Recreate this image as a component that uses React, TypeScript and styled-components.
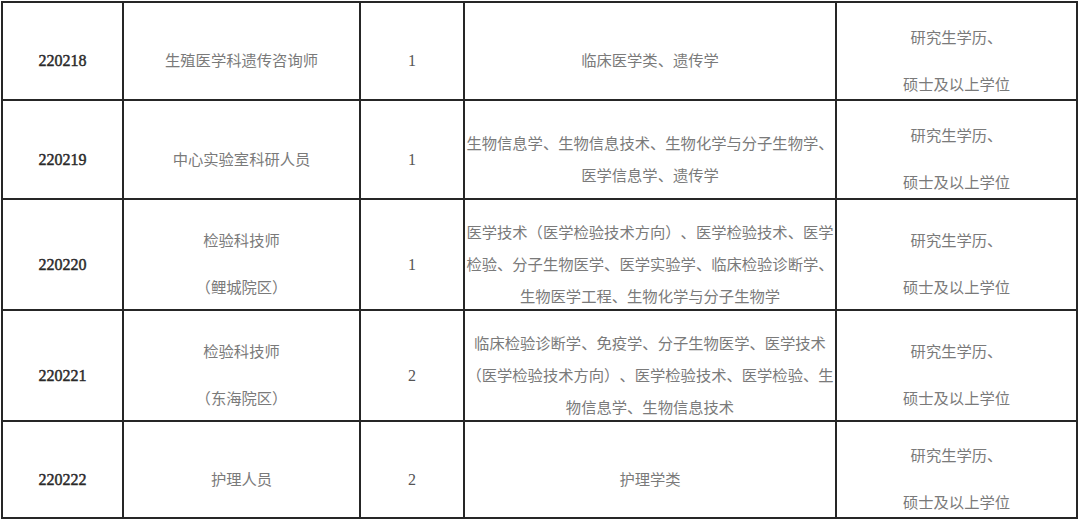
import styled, { createGlobalStyle } from "styled-components";

const GlobalStyle = createGlobalStyle`
  html, body {
    margin: 0;
    padding: 0;
    background: #fff;
  }
`;

const Page = styled.main`
  padding: 1px 0 0 1px;
  width: 1080px;
  height: 524px;
  overflow: hidden;
  box-sizing: border-box;
`;

const Table = styled.table`
  border-collapse: collapse;
  table-layout: fixed;
  width: 1075px;
  font-family: "Noto Sans CJK SC", "Liberation Serif", serif;
  font-size: 15.3px;
  color: #7a7a7a;
  text-spacing-trim: space-all;
`;

const Row = styled.tr<{ $h: number }>`
  height: ${(p) => p.$h}px;
`;

const Cell = styled.td`
  border: 2px solid #262626;
  padding: 16px 0 0;
  text-align: center;
  vertical-align: middle;
  overflow: hidden;
`;

const Stack = styled.div<{ $gap: number }>`
  display: flex;
  flex-direction: column;
  align-items: center;
  gap: ${(p) => p.$gap}px;
`;

const Code = styled.span`
  font-family: "Liberation Serif", serif;
  font-size: 16px;
  color: #2a2a2a;
  -webkit-text-stroke: 0.45px #2a2a2a;
`;

const Count = styled.span`
  font-family: "Liberation Serif", serif;
  font-size: 16px;
  color: #555;
`;

const Line = styled.div`
  line-height: 24px;
  white-space: nowrap;
`;

type Job = {
  code: string;
  title: string[];
  count: string;
  major: string[];
  height: number;
};

const jobs: Job[] = [
  {
    code: "220218",
    title: ["生殖医学科遗传咨询师"],
    count: "1",
    major: ["临床医学类、遗传学"],
    height: 98,
  },
  {
    code: "220219",
    title: ["中心实验室科研人员"],
    count: "1",
    major: ["生物信息学、生物信息技术、生物化学与分子生物学、", "医学信息学、遗传学"],
    height: 99,
  },
  {
    code: "220220",
    title: ["检验科技师", "（鲤城院区）"],
    count: "1",
    major: [
      "医学技术（医学检验技术方向）、医学检验技术、医学",
      "检验、分子生物医学、医学实验学、临床检验诊断学、",
      "生物医学工程、生物化学与分子生物学",
    ],
    height: 111,
  },
  {
    code: "220221",
    title: ["检验科技师", "（东海院区）"],
    count: "2",
    major: [
      "临床检验诊断学、免疫学、分子生物医学、医学技术",
      "（医学检验技术方向）、医学检验技术、医学检验、生",
      "物信息学、生物信息技术",
    ],
    height: 111,
  },
  {
    code: "220222",
    title: ["护理人员"],
    count: "2",
    major: ["护理学类"],
    height: 97,
  },
];

function App() {
  return (
    <>
      <GlobalStyle />
      <Page>
        <Table>
          <colgroup>
            <col style={{ width: 121 }} />
            <col style={{ width: 237 }} />
            <col style={{ width: 104 }} />
            <col style={{ width: 372 }} />
            <col style={{ width: 241 }} />
          </colgroup>
          <tbody>
            {jobs.map((job) => (
              <Row key={job.code} $h={job.height}>
                <Cell>
                  <Code>{job.code}</Code>
                </Cell>
                <Cell>
                  <Stack $gap={23}>
                    {job.title.map((t) => (
                      <Line key={t}>{t}</Line>
                    ))}
                  </Stack>
                </Cell>
                <Cell>
                  <Count>{job.count}</Count>
                </Cell>
                <Cell>
                  <Stack $gap={8}>
                    {job.major.map((m) => (
                      <Line key={m}>{m}</Line>
                    ))}
                  </Stack>
                </Cell>
                <Cell>
                  <Stack $gap={23}>
                    <Line>研究生学历、</Line>
                    <Line>硕士及以上学位</Line>
                  </Stack>
                </Cell>
              </Row>
            ))}
          </tbody>
        </Table>
      </Page>
    </>
  );
}

export default App;
